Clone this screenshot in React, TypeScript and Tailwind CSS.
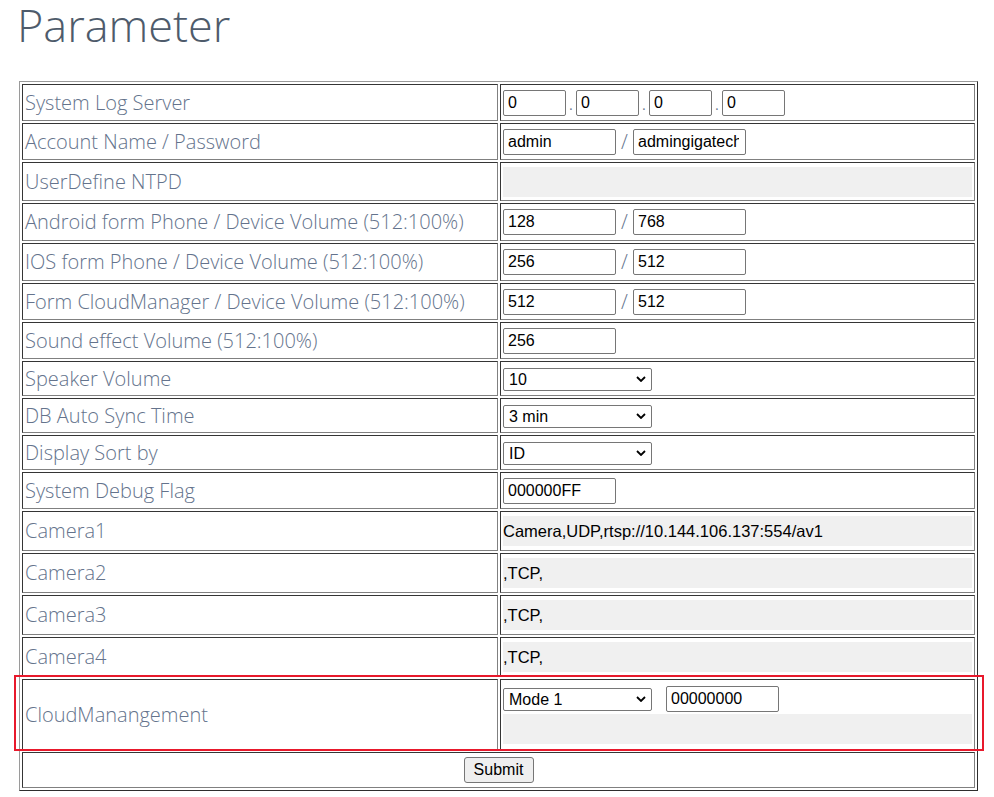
import React from "react";

const cellBorder =
  "border border-t-[#353535] border-l-[#353535] border-r-[#808080] border-b-[#808080]";
const labelText = "font-['Open_Sans',sans-serif] font-light text-[20px] text-[#64738c] whitespace-nowrap";
const arial = "font-['Liberation_Sans',Arial,sans-serif]";

function TextBox({ value, w }: { value: string; w: string }) {
  return (
    <input
      readOnly
      defaultValue={value}
      className={`${w} h-[26px] border border-[#767676] rounded-[2px] bg-white pl-[4px] pr-[6px] text-[16px] text-black ${arial} outline-none`}
    />
  );
}

function Select({ value, w = "w-[149px]" }: { value: string; w?: string }) {
  return (
    <div className={`relative ${w} h-[23px]`}>
      <select
        defaultValue={value}
        className={`appearance-none w-full h-full border border-[#767676] rounded-[2px] bg-white pl-[5px] text-[16px] leading-[19px] text-black ${arial} outline-none`}
      >
        <option value={value}>{value}</option>
      </select>
      {/* dropdown chevron */}
      <svg
        className="absolute right-[6px] top-[9px] pointer-events-none"
        width="10"
        height="6"
        viewBox="0 0 10 6"
      >
        <path d="M1 1 L5 5 L9 1" fill="none" stroke="#000" strokeWidth="1.8" />
      </svg>
    </div>
  );
}

function GrayBox({ children }: { children?: React.ReactNode }) {
  return (
    <div className={`w-full h-[30px] bg-[#f0f0f0] flex items-center text-[16.5px] text-black ${arial} whitespace-nowrap`}>
      {children}
    </div>
  );
}

function Sep({ ch, w }: { ch: string; w: string }) {
  return (
    <span className={`${w} flex justify-center font-['Open_Sans',sans-serif] font-light text-[20px] text-[#64738c]`}>
      {ch}
    </span>
  );
}

function Row({ label, h, children }: { label: string; h: string; children?: React.ReactNode }) {
  return (
    <>
      <div className={`${cellBorder} ${h} flex items-center px-[2px]`}>
        <span className={labelText}>{label}</span>
      </div>
      <div className={`${cellBorder} ${h} flex items-center px-[2px]`}>{children}</div>
    </>
  );
}

export default function App() {
  return (
    <div className="relative w-[994px] h-[797px] bg-white pl-[19px] overflow-hidden">
      <h1 className="ml-[-2px] h-[50px] font-['Open_Sans',sans-serif] font-light text-[45px] leading-[50px] text-[#4e5b6b]">
        Parameter
      </h1>

      <div className="mt-[31px] w-[959px] grid grid-cols-[476px_475px] gap-[2px] p-[2px] border border-t-[#9a9a9a] border-l-[#9a9a9a] border-r-[#2e2e2e] border-b-[#2e2e2e]">
        <Row label="System Log Server" h="h-[37px]">
          <TextBox value="0" w="w-[63px]" />
          <Sep ch="." w="w-[10px]" />
          <TextBox value="0" w="w-[63px]" />
          <Sep ch="." w="w-[10px]" />
          <TextBox value="0" w="w-[63px]" />
          <Sep ch="." w="w-[10px]" />
          <TextBox value="0" w="w-[63px]" />
        </Row>
        <Row label="Account Name / Password" h="h-[37px]">
          <TextBox value="admin" w="w-[113px]" />
          <Sep ch="/" w="w-[17px]" />
          <TextBox value="admingigatech" w="w-[113px]" />
        </Row>
        <Row label="UserDefine NTPD" h="h-[39px]">
          <GrayBox />
        </Row>
        <Row label="Android form Phone / Device Volume (512:100%)" h="h-[38px]">
          <TextBox value="128" w="w-[113px]" />
          <Sep ch="/" w="w-[17px]" />
          <TextBox value="768" w="w-[113px]" />
        </Row>
        <Row label="IOS form Phone / Device Volume (512:100%)" h="h-[38px]">
          <TextBox value="256" w="w-[113px]" />
          <Sep ch="/" w="w-[17px]" />
          <TextBox value="512" w="w-[113px]" />
        </Row>
        <Row label="Form CloudManager / Device Volume (512:100%)" h="h-[37px]">
          <TextBox value="512" w="w-[113px]" />
          <Sep ch="/" w="w-[17px]" />
          <TextBox value="512" w="w-[113px]" />
        </Row>
        <Row label="Sound effect Volume (512:100%)" h="h-[37px]">
          <TextBox value="256" w="w-[113px]" />
        </Row>
        <Row label="Speaker Volume" h="h-[35px]">
          <Select value="10" />
        </Row>
        <Row label="DB Auto Sync Time" h="h-[35px]">
          <Select value="3 min" />
        </Row>
        <Row label="Display Sort by" h="h-[35px]">
          <Select value="ID" />
        </Row>
        <Row label="System Debug Flag" h="h-[37px]">
          <TextBox value="000000FF" w="w-[113px]" />
        </Row>
        <Row label="Camera1" h="h-[40px]">
          <GrayBox>Camera,UDP,rtsp://10.144.106.137:554/av1</GrayBox>
        </Row>
        <Row label="Camera2" h="h-[40px]">
          <GrayBox>,TCP,</GrayBox>
        </Row>
        <Row label="Camera3" h="h-[40px]">
          <GrayBox>,TCP,</GrayBox>
        </Row>
        <Row label="Camera4" h="h-[40px]">
          <GrayBox>,TCP,</GrayBox>
        </Row>

        <div className={`${cellBorder} h-[71px] flex items-center px-[2px]`}>
          <span className={labelText}>CloudManangement</span>
        </div>
        <div className={`${cellBorder} h-[71px] flex flex-col justify-center gap-[2px] px-[2px]`}>
          <div className="flex items-center gap-[14px]">
            <Select value="Mode 1" />
            <TextBox value="00000000" w="w-[113px]" />
          </div>
          <GrayBox />
        </div>

        <div className={`${cellBorder} col-span-2 h-[36px] flex items-center justify-center`}>
          <button
            className={`w-[70px] h-[26px] border border-[#767676] rounded-[3px] bg-[#efefef] text-[16px] text-black ${arial}`}
          >
            Submit
          </button>
        </div>
      </div>

      {/* highlight annotation around the CloudManangement row */}
      <div className="absolute left-[14px] top-[675px] w-[970px] h-[76px] border-2 border-[#e8192c] pointer-events-none" />
    </div>
  );
}
